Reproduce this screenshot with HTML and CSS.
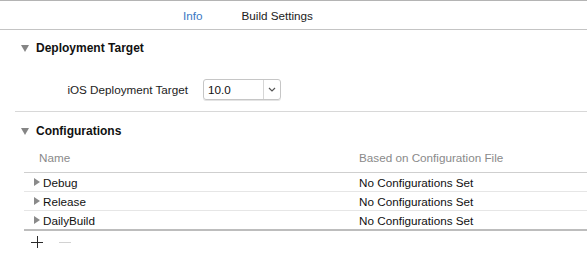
FILE: index.html
```html
<!DOCTYPE html>
<html lang="en">
<head>
    <meta charset="UTF-8">
    <meta name="viewport" content="width=device-width, initial-scale=1.0">
    <title>Project Info</title>
    <link rel="stylesheet" href="styles.css">
</head>
<body>
    <div class="tabs">
        <span class="tab active">Info</span>
        <span class="tab">Build Settings</span>
    </div>

    <div class="section">
        <div class="section-header">
            <span class="disclosure-down"></span>
            <span>Deployment Target</span>
        </div>
        <div class="setting-row">
            <label class="setting-label">iOS Deployment Target</label>
            <div class="popup">
                <span class="popup-value">10.0</span>
                <span class="popup-arrow">
                    <svg width="8" height="5" viewBox="0 0 8 5"><path d="M1 1 L4 4 L7 1" fill="none" stroke="#555" stroke-width="1.2"/></svg>
                </span>
            </div>
        </div>
    </div>

    <div class="section second">
        <div class="section-header">
            <span class="disclosure-down"></span>
            <span>Configurations</span>
        </div>
        <div class="config-table">
            <div class="config-head">
                <span class="col-name">Name</span>
                <span class="col-file">Based on Configuration File</span>
            </div>
            <div class="config-row">
                <span class="col-name"><span class="disclosure-right"></span>Debug</span>
                <span class="col-file">No Configurations Set</span>
            </div>
            <div class="config-row">
                <span class="col-name"><span class="disclosure-right"></span>Release</span>
                <span class="col-file">No Configurations Set</span>
            </div>
            <div class="config-row last">
                <span class="col-name"><span class="disclosure-right"></span>DailyBuild</span>
                <span class="col-file">No Configurations Set</span>
            </div>
            <div class="config-tools">
                <svg class="tool" width="12" height="12" viewBox="0 0 12 12"><path d="M0 6.5 H12 M6.5 0 V12" stroke="#2a2a2a" stroke-width="1"/></svg>
                <svg class="tool" width="12" height="12" viewBox="0 0 12 12"><path d="M0 6.5 H12" stroke="#d2d2d2" stroke-width="1"/></svg>
            </div>
        </div>
    </div>
</body>
</html>
```

FILE: styles.css
```css
body {
    margin: 0;
    font-family: "Liberation Sans", Arial, sans-serif;
    font-size: 11.7px;
    color: #1b1b1b;
    background: #fff;
}
.tabs {
    display: flex;
    align-items: center;
    height: 28px;
    padding-left: 183px;
    gap: 39px;
    border-top: 1px solid #b4b4b4;
    border-bottom: 1px solid #c4c4c4;
}
.tab {
    color: #222;
}
.tab.active {
    color: #3a78c4;
}
.section {
    padding-top: 10px;
    margin-left: 15px;
    border-bottom: 1px solid #d8d8d8;
    padding-bottom: 11px;
}
.section.second {
    border-bottom: none;
    padding-top: 11px;
}
.section-header {
    display: flex;
    align-items: center;
    height: 16px;
    font-weight: bold;
    font-size: 12px;
    color: #111;
}
.disclosure-down {
    width: 0;
    height: 0;
    margin-left: 6px;
    margin-right: 7px;
    border-left: 4.5px solid transparent;
    border-right: 4.5px solid transparent;
    border-top: 7px solid #858585;
}
.setting-row {
    display: flex;
    align-items: center;
    margin-top: 23px;
    padding-left: 50px;
}
.setting-label {
    width: 123px;
    flex-shrink: 0;
    white-space: nowrap;
    text-align: right;
    margin-right: 15px;
    color: #222;
}
.popup {
    display: flex;
    width: 76px;
    height: 19px;
    border: 1px solid #c6c6c6;
    border-radius: 3px;
    box-shadow: 0 1px 0 #e4e4e4;
}
.popup-value {
    flex: 1;
    padding-left: 4px;
    line-height: 19px;
    color: #111;
}
.popup-arrow {
    width: 16px;
    border-left: 1px solid #d6d6d6;
    display: flex;
    align-items: center;
    justify-content: center;
}
.config-table {
    margin-left: 9px;
    margin-top: 4px;
}
.config-head {
    display: flex;
    height: 29px;
    align-items: center;
    border-bottom: 1px solid #cfcfcf;
    color: #8a8a8a;
}
.config-head .col-name {
    padding-left: 15px;
    width: 320px;
}
.col-name {
    width: 335px;
}
.config-row {
    display: flex;
    height: 18px;
    align-items: center;
    border-bottom: 1px solid #e6e6e6;
    color: #111;
}
.config-row.last {
    border-bottom: 2px solid #bdbdbd;
}
.config-row .col-name {
    display: flex;
    align-items: center;
    padding-left: 10px;
    width: 325px;
}
.disclosure-right {
    width: 0;
    height: 0;
    margin-right: 3px;
    border-top: 4px solid transparent;
    border-bottom: 4px solid transparent;
    border-left: 6px solid #8a8a8a;
}
.config-tools {
    display: flex;
    align-items: center;
    height: 21px;
    padding-left: 7px;
    gap: 16px;
}
```
